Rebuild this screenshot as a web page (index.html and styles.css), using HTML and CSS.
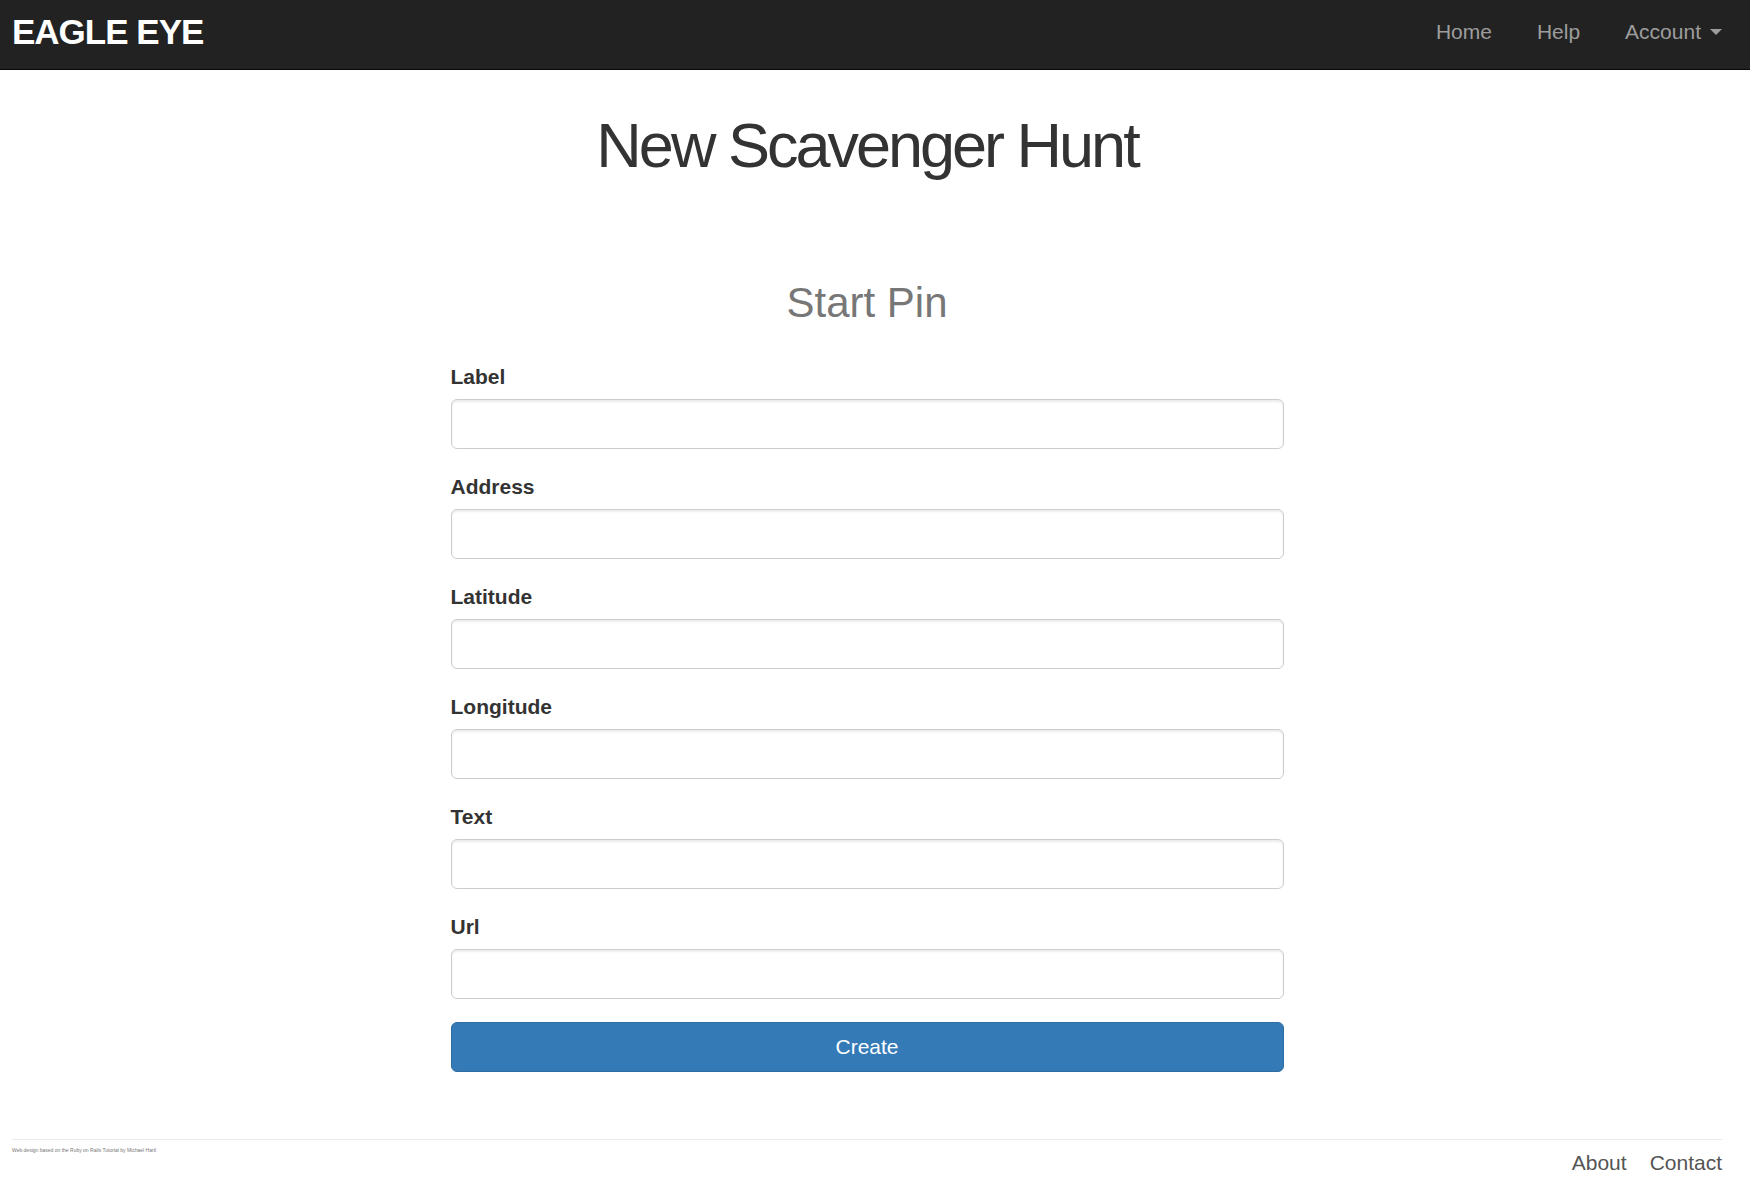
FILE: index.html
```html
<!DOCTYPE html>
<html lang="en">
<head>
<meta charset="utf-8">
<title>New Scavenger Hunt | Eagle Eye</title>
<link rel="stylesheet" href="styles.css">
</head>
<body>
<header class="navbar">
  <a class="logo" href="#">EAGLE EYE</a>
  <nav class="nav">
    <a href="#">Home</a>
    <a href="#">Help</a>
    <a class="dropdown" href="#">Account <span class="caret"></span></a>
  </nav>
</header>
<div class="container">
  <main>
    <h1>New Scavenger Hunt</h1>
    <form class="pin-form">
      <h2>Start Pin</h2>
      <label for="label">Label</label>
      <input type="text" id="label">
      <label for="address">Address</label>
      <input type="text" id="address">
      <label for="latitude">Latitude</label>
      <input type="text" id="latitude">
      <label for="longitude">Longitude</label>
      <input type="text" id="longitude">
      <label for="text">Text</label>
      <input type="text" id="text">
      <label for="url">Url</label>
      <input type="text" id="url">
      <button type="submit">Create</button>
    </form>
  </main>
  <footer class="footer">
    <small>Web design based on the <a href="#">Ruby on Rails Tutorial</a> by <a href="#">Michael Hartl</a></small>
    <nav class="footer-nav">
      <a href="#">About</a>
      <a href="#">Contact</a>
    </nav>
  </footer>
</div>
</body>
</html>
```

FILE: styles.css
```css
* {
  box-sizing: border-box;
}

body {
  margin: 0;
  background: #fff;
  color: #333;
  font-family: "Liberation Sans", Arial, sans-serif;
  font-size: 21px;
  line-height: 30px;
}

a {
  color: inherit;
  text-decoration: none;
}

.navbar {
  display: flex;
  justify-content: space-between;
  height: 70px;
  padding: 0 28px 0 12px;
  background: #222;
  border-bottom: 1px solid #080808;
}

.logo {
  padding-top: 11px;
  color: #fff;
  font-size: 35px;
  font-weight: bold;
  line-height: 42px;
  letter-spacing: -1px;
}

.nav {
  display: flex;
  align-items: flex-start;
  gap: 45px;
  padding-top: 17px;
  color: #9d9d9d;
}

.dropdown {
  display: flex;
  align-items: center;
  gap: 9px;
}

.caret {
  border-top: 6px solid;
  border-right: 6px solid transparent;
  border-left: 6px solid transparent;
}

.container {
  padding: 0 28px 0 12px;
}

h1 {
  margin: 0;
  padding: 39px 0 96px;
  font-size: 63px;
  font-weight: normal;
  line-height: 72px;
  letter-spacing: -3px;
  text-align: center;
}

.pin-form {
  display: flex;
  flex-direction: column;
  width: calc(50% - 22px);
  margin: 0 auto;
}

h2 {
  margin: 0 0 33px;
  color: #777;
  font-size: 42px;
  font-weight: normal;
  line-height: 52px;
  text-align: center;
}

label {
  margin-bottom: 7px;
  font-weight: bold;
}

input {
  height: 50px;
  margin-bottom: 23px;
  padding: 8px 18px;
  border: 1px solid #ccc;
  border-radius: 6px;
  box-shadow: inset 0 2px 2px rgba(0, 0, 0, 0.075);
  color: #555;
  font: inherit;
}

button {
  height: 50px;
  border: 1px solid #2e6da4;
  border-radius: 6px;
  background: #337ab7;
  color: #fff;
  font: inherit;
}

.footer {
  display: flex;
  justify-content: space-between;
  margin-top: 67px;
  padding: 8px 0 14px;
  border-top: 1px solid #eaeaea;
  color: #777;
}

small {
  font-size: 5px;
  line-height: 5px;
}

.footer-nav {
  display: flex;
  gap: 23px;
  color: #555;
}
```
